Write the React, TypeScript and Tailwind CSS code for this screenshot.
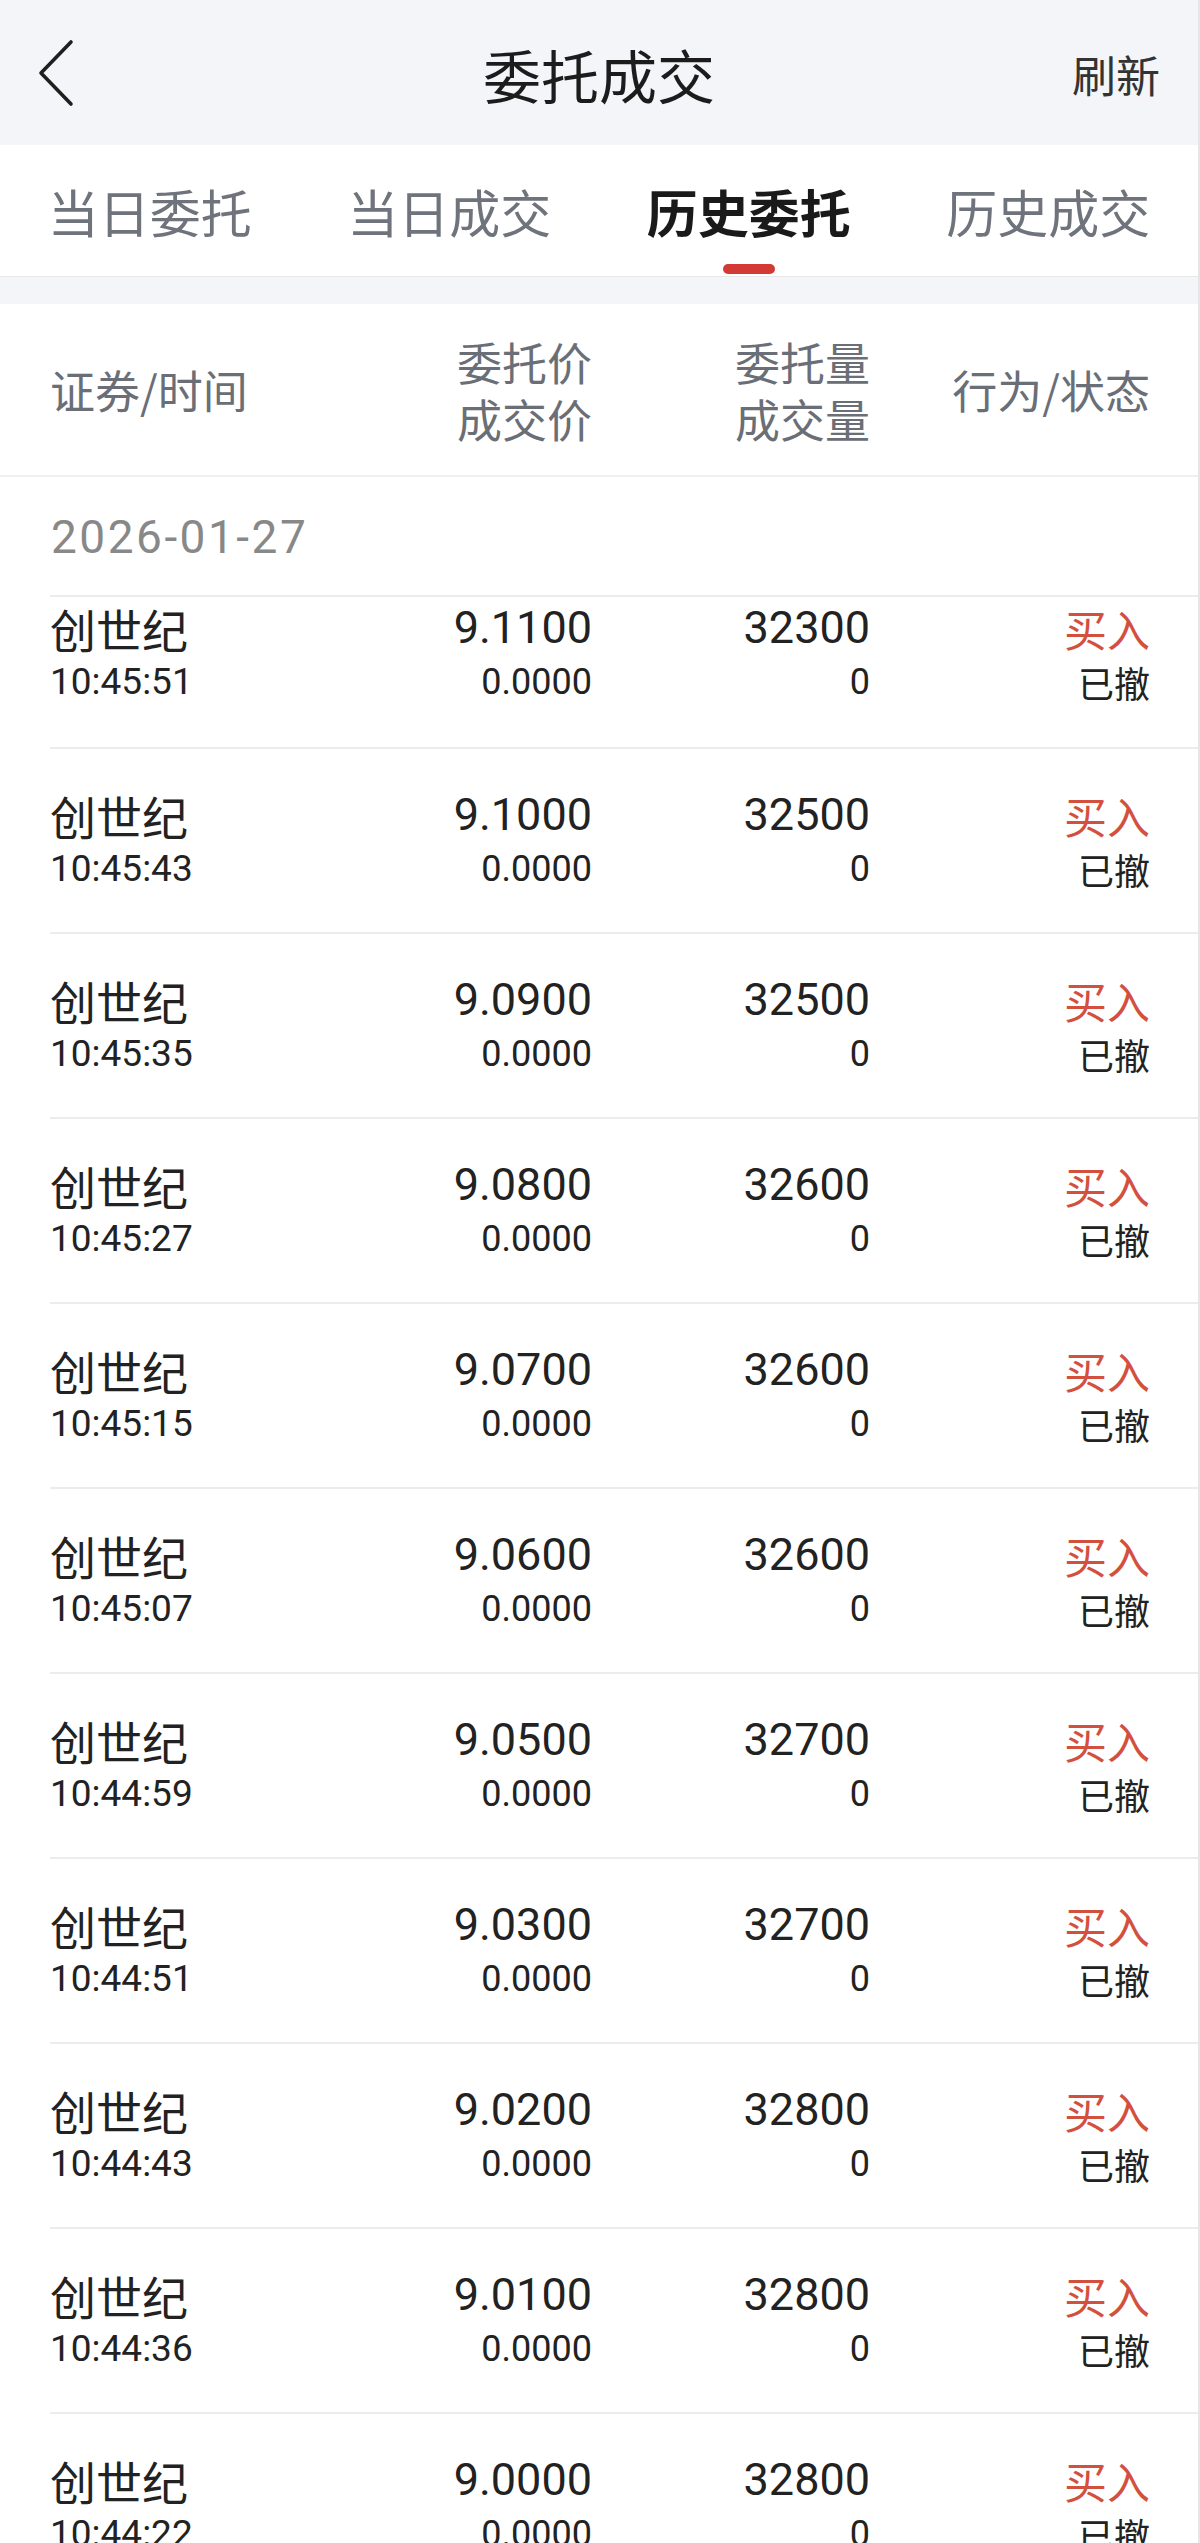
const rows: [string, string, string][] = [
  ["9.1100", "32300", "10:45:51"],
  ["9.1000", "32500", "10:45:43"],
  ["9.0900", "32500", "10:45:35"],
  ["9.0800", "32600", "10:45:27"],
  ["9.0700", "32600", "10:45:15"],
  ["9.0600", "32600", "10:45:07"],
  ["9.0500", "32700", "10:44:59"],
  ["9.0300", "32700", "10:44:51"],
  ["9.0200", "32800", "10:44:43"],
  ["9.0100", "32800", "10:44:36"],
  ["9.0000", "32800", "10:44:22"],
];

const tabs = ["当日委托", "当日成交", "历史委托", "历史成交"];

export default function App() {
  return (
    <div className="relative h-[2543px] w-[1200px] overflow-hidden border-r-2 border-[#e6e6e6] bg-white font-['Noto_Sans_CJK_SC',sans-serif]">
      {/* Top bar */}
      <div className="grid h-[145px] grid-cols-[1fr_auto_1fr] items-center bg-[#f4f5f9]">
        <div className="pl-[37px]">
          <svg width="38" height="68" viewBox="0 0 38 68" fill="none">
            <path d="M34 3 L4 34 L34 65" stroke="#1f1f1f" strokeWidth="3.6" strokeLinecap="round" strokeLinejoin="round" />
          </svg>
        </div>
        <div className="pt-[2px] text-[58px] leading-[70px] text-[#1c1c1c]">委托成交</div>
        <div className="pr-[38px] pt-[2px] text-right text-[44px] leading-[60px] text-[#333333]">刷新</div>
      </div>

      {/* Tabs */}
      <div className="flex h-[132px] border-b border-[#e8e8e8] bg-white">
        {tabs.map((t, i) => (
          <div key={t} className="relative flex flex-1 items-center justify-center">
            <span
              className={
                i === 2
                  ? "text-[51px] leading-[64px] font-bold text-[#1a1a1a]"
                  : "text-[51px] leading-[64px] text-[#6f737b]"
              }
            >
              {t}
            </span>
            {i === 2 && (
              <div className="absolute bottom-[2px] left-1/2 h-[10px] w-[52px] -translate-x-1/2 rounded-full bg-[#d33a36]" />
            )}
          </div>
        ))}
      </div>
      <div className="h-[27px] bg-[#f4f5f9]" />

      {/* Column header */}
      <div className="grid h-[173px] grid-cols-[312px_230px_278px_280px] items-center border-b-2 border-[#f0f0f0] pl-[50px] text-[45px] leading-[57px] text-[#6a6e76]">
        <div>证券/时间</div>
        <div className="flex flex-col items-end">
          <div>委托价</div>
          <div>成交价</div>
        </div>
        <div className="flex flex-col items-end">
          <div>委托量</div>
          <div>成交量</div>
        </div>
        <div className="text-right">行为/状态</div>
      </div>

      {/* Date */}
      <div className="flex h-[118px] items-center pl-[51px] pt-[2px] font-['Roboto',sans-serif] text-[46px] tracking-[2.5px] text-[#888888]">
        2026-01-27
      </div>

      {/* Rows */}
      <div className="ml-[50px]">
        {rows.map(([price, qty, time], i) => (
          <div
            key={i}
            className={
              "grid grid-cols-[312px_230px_278px_280px] border-t-2 border-[#ececec] " +
              (i === 0 ? "pt-[1px] pb-[41px]" : "pt-[36px] pb-[39px]")
            }
          >
            <div>
              <div className="h-[60px] text-[46px] leading-[60px] text-[#222222]">创世纪</div>
              <div className="h-[48px] font-['Roboto',sans-serif] text-[37px] leading-[48px] text-[#222222]">{time}</div>
            </div>
            <div className="text-right font-['Roboto',sans-serif]">
              <div className="h-[60px] text-[45px] leading-[60px] text-[#222222]">{price}</div>
              <div className="h-[48px] text-[36px] leading-[48px] text-[#222222]">0.0000</div>
            </div>
            <div className="text-right font-['Roboto',sans-serif]">
              <div className="h-[60px] text-[45px] leading-[60px] text-[#222222]">{qty}</div>
              <div className="h-[48px] text-[36px] leading-[48px] text-[#222222]">0</div>
            </div>
            <div className="text-right">
              <div className="h-[60px] text-[43px] leading-[60px] text-[#d4503e]">买入</div>
              <div className="h-[48px] text-[36px] leading-[48px] text-[#222222]">已撤</div>
            </div>
          </div>
        ))}
      </div>
    </div>
  );
}
